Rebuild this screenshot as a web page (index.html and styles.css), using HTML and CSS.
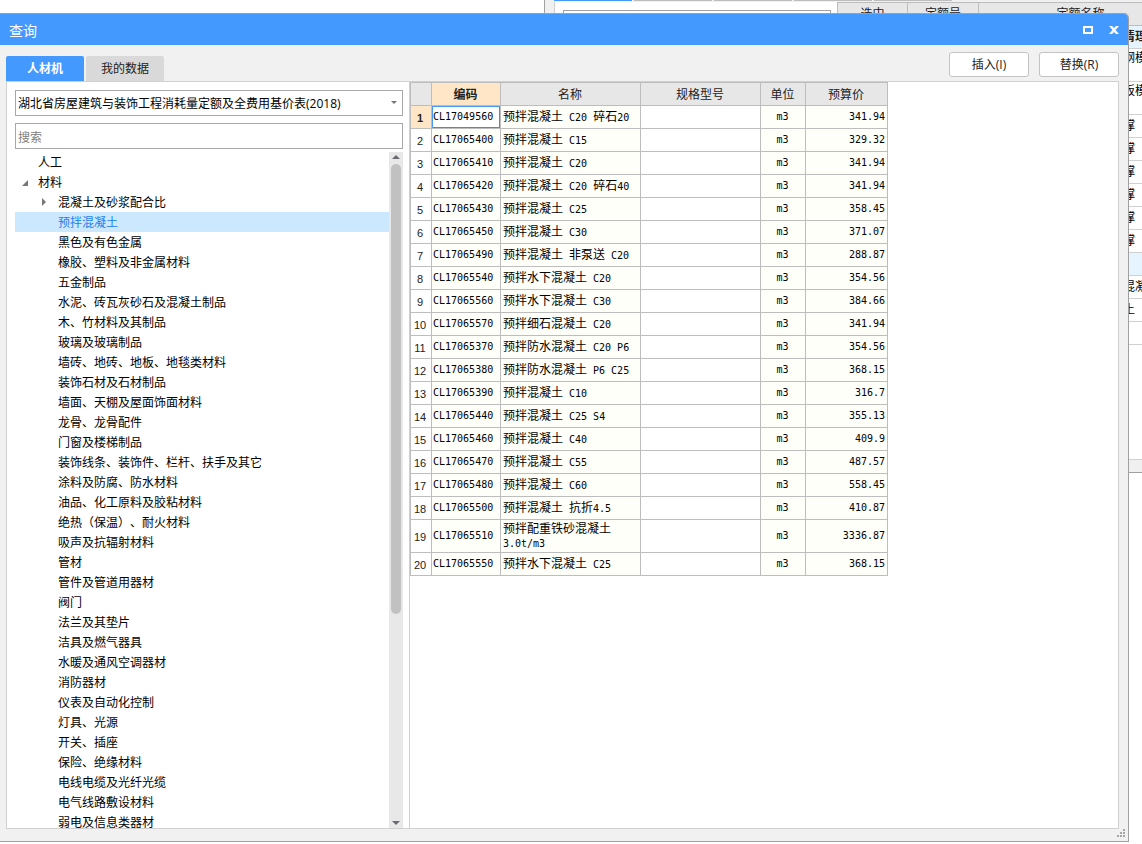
FILE: index.html
```html
<!DOCTYPE html>
<html lang="zh-CN">
<head>
<meta charset="utf-8">
<title>查询</title>
<link rel="stylesheet" href="styles.css">
</head>
<body>
<div class="desktop">
  <div class="app" aria-hidden="true">
    <div class="app-left"></div>
    <div class="app-right">
      <div class="app-tabs"><i class="on"></i><i></i><i></i><i></i><i></i></div>
      <div class="app-body">
        <div class="app-side"><div class="app-box"></div></div>
        <div class="app-grid">
          <table class="quota">
            <colgroup><col class="q-pick"><col class="q-no"><col class="q-name"></colgroup>
            <tr class="q-head"><th>选中</th><th>定额号</th><th>定额名称</th></tr>
            <tr class="q-group"><td></td><td></td><td>清理</td></tr>
            <tr class="q-tall"><td></td><td></td><td>钢模</td></tr>
            <tr class="q-tall"><td></td><td></td><td>板模</td></tr>
            <tr><td></td><td></td><td>撑</td></tr>
            <tr><td></td><td></td><td>撑</td></tr>
            <tr><td></td><td></td><td>撑</td></tr>
            <tr><td></td><td></td><td>撑</td></tr>
            <tr><td></td><td></td><td>撑</td></tr>
            <tr><td></td><td></td><td>撑</td></tr>
            <tr class="q-group"><td></td><td></td><td></td></tr>
            <tr><td></td><td></td><td>混凝</td></tr>
            <tr><td></td><td></td><td>土</td></tr>
            <tr><td></td><td></td><td></td></tr>
          </table>
          <div class="app-hscroll"></div>
          <div class="app-rest"></div>
        </div>
      </div>
    </div>
  </div>

  <section class="dialog" role="dialog" aria-labelledby="dlg-title">
    <header class="titlebar">
      <h1 id="dlg-title">查询</h1>
      <button class="win-btn" aria-label="最大化"><svg width="10" height="8" viewBox="0 0 10 8"><path d="M1 1h8v6H1z" fill="none" stroke="#fff" stroke-width="2"/></svg></button>
      <button class="win-btn" aria-label="关闭"><svg width="10" height="8" viewBox="0 0 10 8"><path d="M0 0h3l2 2 2-2h3L6.500 4 10 8H7L5 6 3 8H0l3.500-4z" fill="#fff"/></svg></button>
    </header>
    <div class="toolbar">
      <div class="tabs" role="tablist">
        <button class="tab active" role="tab" aria-selected="true">人材机</button>
        <button class="tab" role="tab" aria-selected="false">我的数据</button>
      </div>
      <div class="actions">
        <button class="action">插入(I)</button>
        <button class="action">替换(R)</button>
      </div>
    </div>
    <main class="panel">
      <aside class="side">
        <div class="combo">
          <select aria-label="定额库"><option>湖北省房屋建筑与装饰工程消耗量定额及全费用基价表(2018)</option></select>
        </div>
        <input class="search" type="text" placeholder="搜索" aria-label="搜索">
        <div class="tree-area">
          <ul class="tree">
            <li class="l1">人工</li>
            <li class="l1 open">材料</li>
            <li class="closed">混凝土及砂浆配合比</li>
            <li class="selected">预拌混凝土</li>
            <li>黑色及有色金属</li>
            <li>橡胶、塑料及非金属材料</li>
            <li>五金制品</li>
            <li>水泥、砖瓦灰砂石及混凝土制品</li>
            <li>木、竹材料及其制品</li>
            <li>玻璃及玻璃制品</li>
            <li>墙砖、地砖、地板、地毯类材料</li>
            <li>装饰石材及石材制品</li>
            <li>墙面、天棚及屋面饰面材料</li>
            <li>龙骨、龙骨配件</li>
            <li>门窗及楼梯制品</li>
            <li>装饰线条、装饰件、栏杆、扶手及其它</li>
            <li>涂料及防腐、防水材料</li>
            <li>油品、化工原料及胶粘材料</li>
            <li>绝热（保温）、耐火材料</li>
            <li>吸声及抗辐射材料</li>
            <li>管材</li>
            <li>管件及管道用器材</li>
            <li>阀门</li>
            <li>法兰及其垫片</li>
            <li>洁具及燃气器具</li>
            <li>水暖及通风空调器材</li>
            <li>消防器材</li>
            <li>仪表及自动化控制</li>
            <li>灯具、光源</li>
            <li>开关、插座</li>
            <li>保险、绝缘材料</li>
            <li>电线电缆及光纤光缆</li>
            <li>电气线路敷设材料</li>
            <li>弱电及信息类器材</li>
          </ul>
          <div class="scrollbar"><i class="arrow-up"></i><div class="track"><div class="thumb"></div></div><i class="arrow-down"></i></div>
        </div>
      </aside>
      <div class="content">
        <table class="data">
          <colgroup><col class="c-idx"><col class="c-code"><col class="c-name"><col class="c-spec"><col class="c-unit"><col class="c-price"></colgroup>
          <thead><tr><th></th><th class="current">编码</th><th>名称</th><th>规格型号</th><th>单位</th><th>预算价</th></tr></thead>
          <tbody>
            <tr class="current-row"><th>1</th><td class="focus">CL17049560</td><td>预拌混凝土<b> C20 </b>碎石<b>20</b></td><td></td><td>m3</td><td>341.94</td></tr>
            <tr><th>2</th><td>CL17065400</td><td>预拌混凝土<b> C15</b></td><td></td><td>m3</td><td>329.32</td></tr>
            <tr><th>3</th><td>CL17065410</td><td>预拌混凝土<b> C20</b></td><td></td><td>m3</td><td>341.94</td></tr>
            <tr><th>4</th><td>CL17065420</td><td>预拌混凝土<b> C20 </b>碎石<b>40</b></td><td></td><td>m3</td><td>341.94</td></tr>
            <tr><th>5</th><td>CL17065430</td><td>预拌混凝土<b> C25</b></td><td></td><td>m3</td><td>358.45</td></tr>
            <tr><th>6</th><td>CL17065450</td><td>预拌混凝土<b> C30</b></td><td></td><td>m3</td><td>371.07</td></tr>
            <tr><th>7</th><td>CL17065490</td><td>预拌混凝土<b> </b>非泵送<b> C20</b></td><td></td><td>m3</td><td>288.87</td></tr>
            <tr><th>8</th><td>CL17065540</td><td>预拌水下混凝土<b> C20</b></td><td></td><td>m3</td><td>354.56</td></tr>
            <tr><th>9</th><td>CL17065560</td><td>预拌水下混凝土<b> C30</b></td><td></td><td>m3</td><td>384.66</td></tr>
            <tr><th>10</th><td>CL17065570</td><td>预拌细石混凝土<b> C20</b></td><td></td><td>m3</td><td>341.94</td></tr>
            <tr><th>11</th><td>CL17065370</td><td>预拌防水混凝土<b> C20 P6</b></td><td></td><td>m3</td><td>354.56</td></tr>
            <tr><th>12</th><td>CL17065380</td><td>预拌防水混凝土<b> P6 C25</b></td><td></td><td>m3</td><td>368.15</td></tr>
            <tr><th>13</th><td>CL17065390</td><td>预拌混凝土<b> C10</b></td><td></td><td>m3</td><td>316.7</td></tr>
            <tr><th>14</th><td>CL17065440</td><td>预拌混凝土<b> C25 S4</b></td><td></td><td>m3</td><td>355.13</td></tr>
            <tr><th>15</th><td>CL17065460</td><td>预拌混凝土<b> C40</b></td><td></td><td>m3</td><td>409.9</td></tr>
            <tr><th>16</th><td>CL17065470</td><td>预拌混凝土<b> C55</b></td><td></td><td>m3</td><td>487.57</td></tr>
            <tr><th>17</th><td>CL17065480</td><td>预拌混凝土<b> C60</b></td><td></td><td>m3</td><td>558.45</td></tr>
            <tr><th>18</th><td>CL17065500</td><td>预拌混凝土<b> </b>抗折<b>4.5</b></td><td></td><td>m3</td><td>410.87</td></tr>
            <tr class="two-line"><th>19</th><td>CL17065510</td><td>预拌配重铁砂混凝土<br><b>3.0t/m3</b></td><td></td><td>m3</td><td>3336.87</td></tr>
            <tr><th>20</th><td>CL17065550</td><td>预拌水下混凝土<b> C25</b></td><td></td><td>m3</td><td>368.15</td></tr>
          </tbody>
        </table>
      </div>
    </main>
    <footer class="statusbar"><svg width="8" height="8" viewBox="0 0 8 8" fill="#a6a6a6"><path d="M6 0h2v2H6zM3 3h2v2H3zM6 3h2v2H6zM0 6h2v2H0zM3 6h2v2H3zM6 6h2v2H6z"/></svg></footer>
  </section>
</div>
</body>
</html>
```
FILE: styles.css
```css
* { box-sizing: border-box; }
html, body { height: 100%; }
body {
  margin: 0;
  background: #fff;
  color: #000;
  font: 12px/20px "Open Sans", "Noto Sans CJK SC", sans-serif;
  text-spacing-trim: space-all;
  overflow: hidden;
}
button, input, select { font: inherit; margin: 0; }
.desktop { position: relative; height: 100%; overflow: hidden; }

/* window behind the dialog */
.app { display: flex; height: calc(100% - 2px); }
.app-left { flex: 0 0 545px; border-right: 1px solid #a0a0a0; }
.app-right { flex: 1; min-width: 0; display: flex; flex-direction: column; padding-left: 9px; background: #f0f0f0; }
.app-tabs { display: flex; gap: 2px; height: 2px; }
.app-tabs i { width: 78px; height: 1px; background: #bdbdbd; }
.app-tabs .on { background: #4499ff; }
.app-body { flex: 1; display: flex; min-height: 0; border-left: 1px solid #d0d0d0; background: #fff; }
.app-side { flex: 0 0 282px; padding: 8px 6px 0 8px; }
.app-box { height: 26px; border: 1px solid #a0a0a0; }
.app-grid { flex: 1; min-width: 0; overflow: hidden; display: flex; flex-direction: column; }
.quota { flex: none; width: 346px; table-layout: fixed; border-spacing: 0; border-left: 1px solid #bdbdbd; border-top: 1px solid #bdbdbd; }
.q-pick { width: 70px; }
.q-no { width: 71px; }
.q-name { width: 204px; }
.quota th, .quota td { height: 23px; padding: 0; line-height: 20px; border-right: 1px solid #d0d0d0; border-bottom: 1px solid #d0d0d0; }
.quota th { background: #e7e7e7; border-color: #bdbdbd; font-weight: 400; color: #222; }
.quota td:last-child { padding-left: 144px; }
.q-group td { background: #e6f4ff; font-weight: 700; color: #222; }
.quota .q-tall td { height: 33px; padding-bottom: 14px; line-height: 18px; }
.app-hscroll { flex: none; height: 14px; margin-top: 114px; background: #f0f0f0; border-top: 1px solid #d0d0d0; border-bottom: 1px solid #a0a0a0; }
.app-rest { flex: 1; }

/* dialog */
.dialog {
  position: absolute;
  inset: 13px 13px 2px 0;
  display: flex;
  flex-direction: column;
  background: #f1f1f1;
  border: 1px solid #a0a0a0;
  border-left: 0;
  border-radius: 0 5px 0 0;
  overflow: hidden;
}
.titlebar { flex: none; display: flex; align-items: center; gap: 16px; height: 31px; padding: 0 9px; background: #4499ff; color: #fff; }
.titlebar h1 { flex: 1; margin: 0; padding-top: 2px; font-size: 14px; line-height: 20px; font-weight: 400; }
.win-btn { display: flex; padding: 0; border: 0; background: none; }

.toolbar { flex: none; display: flex; justify-content: space-between; align-items: flex-end; height: 36px; padding: 0 9px 0 6px; }
.tabs { display: flex; gap: 2px; }
.tab { width: 78px; height: 25px; padding: 0; border: 0; border-radius: 2px 2px 0 0; background: #d9d9d9; color: #222; }
.tab.active { background: #4499ff; color: #fff; font-weight: 700; }
.actions { display: flex; gap: 10px; padding-bottom: 4px; }
.action { width: 80px; height: 25px; padding: 0; border: 1px solid #c3c3c3; border-radius: 3px; background: #fff; color: #222; }

.panel { flex: 1; min-height: 0; display: flex; margin: 0 9px 0 6px; border: 1px solid #d0d0d0; background: #fff; }
.side { flex: 0 0 403px; display: flex; flex-direction: column; min-height: 0; padding: 8px 6px 0 8px; border-right: 1px solid #d0d0d0; }
.combo { position: relative; flex: none; height: 26px; margin-bottom: 7px; }
.combo::after { content: ""; position: absolute; right: 6px; top: 11px; border: 3px solid transparent; border-top-color: #777; border-bottom: 0; pointer-events: none; }
.combo select { appearance: none; width: 100%; height: 26px; padding: 2px 16px 0 2px; border: 1px solid #a8a8a8; border-radius: 0; background: #fff; color: #000; }
.search { flex: none; width: 100%; height: 26px; padding: 2px 2px 0; border: 1px solid #a8a8a8; border-radius: 0; background: #fff; }
.search::placeholder { color: #808080; opacity: 1; }

.tree-area { flex: 1; min-height: 0; display: flex; margin-top: 3px; }
.tree { flex: 1; min-width: 0; margin: 0; padding: 0; list-style: none; overflow: hidden; }
.tree li { position: relative; height: 20px; padding-left: 43px; line-height: 22px; white-space: nowrap; }
.tree .l1 { padding-left: 23px; }
.tree .selected { background: #cce8ff; color: #2080f0; }
.open::before { content: ""; position: absolute; left: 7px; top: 8px; border-left: 6px solid transparent; border-bottom: 6px solid #777; }
.closed::before { content: ""; position: absolute; left: 27px; top: 6px; border: 4px solid transparent; border-left-color: #777; border-right: 0; }
.scrollbar { flex: 0 0 14px; display: flex; flex-direction: column; align-items: center; padding: 3px 0; background: #e8e8e8; }
.track { flex: 1; width: 10px; padding: 5px 0; }
.thumb { height: 69%; border-radius: 5px; background: #c1c1c1; }
.arrow-up { border: 4px solid transparent; border-bottom-color: #6a6a74; border-top: 0; }
.arrow-down { border: 4px solid transparent; border-top-color: #6a6a74; border-bottom: 0; }

/* data grid */
.content { flex: 1; min-width: 0; overflow: hidden; }
.data { width: 478px; table-layout: fixed; border-spacing: 0; border-left: 1px solid #bdbdbd; border-top: 1px solid #bdbdbd; }
.c-idx { width: 21px; }
.c-code { width: 69px; }
.c-name { width: 140px; }
.c-spec { width: 120px; }
.c-unit { width: 45px; }
.c-price { width: 82px; }
.data th, .data td { height: 23px; padding: 0 2px 0 1px; border-right: 1px solid #bdbdbd; border-bottom: 1px solid #bdbdbd; line-height: 14px; white-space: nowrap; }
.data thead th { padding-top: 2px; background: #e7e7e7; color: #222; font-weight: 400; }
.data thead .current { background: #ffe6c7; font-weight: 700; }
.data tbody th { padding: 1px 2px 0 0; font: 11px/14px "Liberation Sans", sans-serif; color: #222; }
.data .current-row th { background: #ffe6c7; font-weight: 700; }
.data td { background: #fffffa; font: 10px/14px "DejaVu Sans Mono", monospace; }
.data td:nth-child(3) { padding-left: 2px; font: 12px/14px "Noto Sans CJK SC", sans-serif; }
.data td:nth-child(4) { background: #fff; }
.data td:nth-child(5) { text-align: center; }
.data td:nth-child(6) { text-align: right; }
.data td b { font: 10px/14px "DejaVu Sans Mono", monospace; white-space: pre; }
.data td.focus { background: #fff; box-shadow: inset 1px 1px #4499ff, inset -1px -1px #808080; }
.data .two-line td { height: 33px; }

.statusbar { flex: none; display: flex; justify-content: flex-end; align-items: flex-end; height: 12px; padding: 0 3px 4px 0; }
```
